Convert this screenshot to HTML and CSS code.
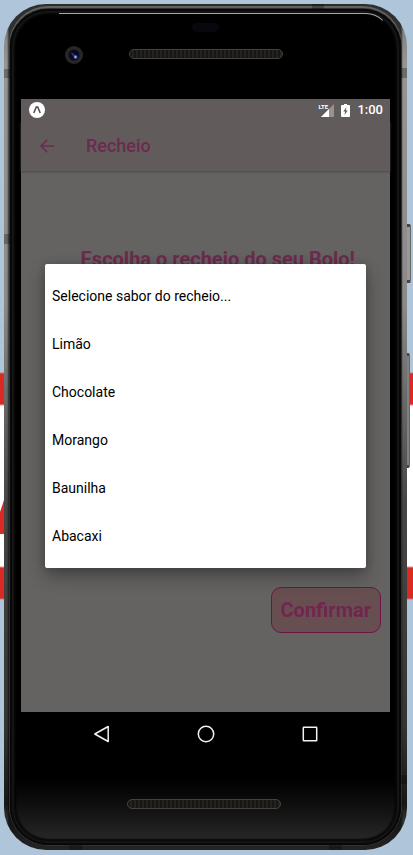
FILE: index.html
```html
<!DOCTYPE html>
<html lang="pt-BR">
<head>
<meta charset="utf-8">
<meta name="viewport" content="width=device-width, initial-scale=1">
<title>Recheio</title>
<link rel="stylesheet" href="styles.css">
</head>
<body>
<div class="stage">
  <svg class="banner-mark" viewBox="0 0 6 36" aria-hidden="true"><path d="M0 12L4 0H6V34H0Z" fill="#d92a23"/></svg>
  <span class="side-key side-key-power"></span>
  <span class="side-key side-key-volume"></span>
  <div class="phone">
    <span class="seam seam-left-top"></span>
    <span class="seam seam-left-middle"></span>
    <span class="seam seam-right-top"></span>
    <span class="seam seam-right-bottom"></span>
    <span class="seam seam-top"></span>
    <span class="seam seam-bottom-left"></span>
    <span class="seam seam-bottom-right"></span>
    <div class="glass">
      <div class="bezel-top">
        <span class="glint"></span>
        <span class="sensor"></span>
        <svg class="camera" viewBox="0 0 18 18" aria-hidden="true">
          <circle cx="9" cy="9" r="9" fill="#292725"/>
          <circle cx="9" cy="9" r="5.5" fill="#080b1d"/>
          <path d="M6 6l3 2 2 4-4-3z" fill="#25367c"/>
          <circle cx="10.5" cy="11" r="2" fill="#4258b8"/>
          <circle cx="10.5" cy="11" r="1" fill="#a8baff"/>
        </svg>
        <span class="speaker"></span>
      </div>

      <div class="screen">
        <div class="status-bar">
          <svg class="app-badge" viewBox="0 0 16 16" aria-hidden="true">
            <circle cx="8" cy="8" r="8" fill="#fff"/>
            <path d="M4.8 11L7.3 5h1.4l2.5 6" fill="none" stroke="#514b4b" stroke-width="1.5"/>
          </svg>
          <div class="status-icons">
            <div class="signal">
              <span class="network">LTE</span>
              <svg class="signal-bars" viewBox="0 0 13 13" aria-hidden="true">
                <path d="M13 0V13H0z" fill="#979292"/>
                <path d="M8 5V13H0z" fill="#fff"/>
              </svg>
            </div>
            <svg class="battery" viewBox="0 0 9 13" aria-hidden="true">
              <path d="M3 0h3v1H8q1 0 1 1v10q0 1-1 1H1q-1 0-1-1V2q0-1 1-1h2z" fill="#fff"/>
              <path d="M5.500 3L2.300 7.500h1.800L3.500 11 6.700 6.500H4.800z" fill="#625b5b"/>
            </svg>
            <span class="clock">1:00</span>
          </div>
        </div>
        <header class="app-bar">
          <button class="back" type="button" aria-label="Voltar">
            <svg viewBox="0 0 14 14" aria-hidden="true"><path d="M14 7H1M7.300.7L1 7l6.300 6.300" fill="none" stroke="#6b2b4e" stroke-width="1.500"/></svg>
          </button>
          <h1 class="title">Recheio</h1>
        </header>
        <main class="content">
          <h2 class="prompt">Escolha o recheio do seu Bolo!</h2>
          <button class="confirm" type="button">Confirmar</button>
        </main>
        <div class="overlay">
          <div class="dialog" role="dialog" aria-label="Sabor do recheio">
            <button class="option" type="button">Selecione sabor do recheio...</button>
            <button class="option" type="button">Limão</button>
            <button class="option" type="button">Chocolate</button>
            <button class="option" type="button">Morango</button>
            <button class="option" type="button">Baunilha</button>
            <button class="option" type="button">Abacaxi</button>
          </div>
        </div>
      </div>

      <div class="bezel-bottom">
        <nav class="nav-bar">
          <button class="nav-key" type="button" aria-label="Anterior"><svg viewBox="0 0 24 24" aria-hidden="true"><path d="M18.200 4.500v15L4.800 12z" stroke-linejoin="round"/></svg></button>
          <button class="nav-key" type="button" aria-label="Início"><svg viewBox="0 0 24 24" aria-hidden="true"><circle cx="12" cy="12" r="7.700"/></svg></button>
          <button class="nav-key" type="button" aria-label="Recentes"><svg viewBox="0 0 24 24" aria-hidden="true"><rect x="5.300" y="5.300" width="13.400" height="13.400" rx=".5"/></svg></button>
        </nav>
        <span class="speaker speaker-bottom"></span>
      </div>
    </div>
  </div>
</div>
</body>
</html>
```
FILE: styles.css
```css
* {
  box-sizing: border-box;
}

body {
  margin: 0;
  font-family: Roboto, "Liberation Sans", sans-serif;
}

button {
  margin: 0;
  padding: 0;
  border: 0;
  background: none;
  font: inherit;
  cursor: pointer;
}

svg {
  display: block;
}

.stage {
  position: relative;
  display: flex;
  min-height: 100vh;
  padding: 4px 6px 5px 4px;
  overflow: hidden;
  background: linear-gradient(#afc5da 372px, #d92a23 374px 404px, #fff 406px 566px, #d92a23 568px 598px, #afc5da 600px);
}

.banner-mark {
  position: absolute;
  left: 0;
  top: 500px;
  width: 6px;
  height: 36px;
}

.side-key {
  position: absolute;
  width: 5px;
  border: 1px solid #666;
  border-top: 3px solid #444;
  border-bottom: 3px solid #444;
  border-radius: 0 2px 2px 0;
  background: #999;
}

.side-key-power {
  top: 224px;
  right: 2px;
  height: 59px;
}

.side-key-volume {
  top: 353px;
  right: 3px;
  height: 115px;
  background: #808080;
}

.phone {
  position: relative;
  display: flex;
  flex: 1;
  padding: 5px 6px;
  border-radius: 42px;
  background:
    linear-gradient(90deg, #0000 3px, #000000a0 5px, #000000a0 calc(100% - 6px), #0000 calc(100% - 4px)),
    linear-gradient(#777 0, #969494 60px, #8b8989 300px, #464646 500px, #353535 720px, #171717 800px, #656364 100%);
}

.glass {
  display: flex;
  flex: 1;
  flex-direction: column;
  padding: 0 11px;
  border-radius: 38px;
  background: linear-gradient(#000 0, #000 calc(100% - 65px), #121212 calc(100% - 35px), #292929 calc(100% - 3px), #000 100%);
  box-shadow: inset 0 0 0 2px #080808, inset 0 0 2px 4px #181818, inset 0 0 2px 6px #050505, 0 0 0 1px #303030, 0 -2px 0 1px #606060;
}

.seam {
  position: absolute;
  background: #00000045;
}

.seam-left-top {
  top: 65px;
  left: 0;
  width: 6px;
  height: 9px;
}

.seam-left-middle {
  top: 230px;
  left: 0;
  width: 6px;
  height: 10px;
}

.seam-right-top {
  top: 64px;
  right: 0;
  width: 6px;
  height: 10px;
}

.seam-right-bottom {
  right: 0;
  bottom: 66px;
  width: 6px;
  height: 9px;
}

.seam-top {
  top: 0;
  right: 83px;
  width: 12px;
  height: 5px;
}

.seam-bottom-left {
  bottom: 0;
  left: 65px;
  width: 13px;
  height: 5px;
}

.seam-bottom-right {
  right: 65px;
  bottom: 0;
  width: 13px;
  height: 5px;
}

.bezel-top {
  position: relative;
  display: flex;
  justify-content: center;
  height: 90px;
  padding-top: 40px;
}

.glint {
  position: absolute;
  top: 4px;
  right: 0;
  left: 38px;
  height: 24px;
  border-top: 1px solid #a1a8a6;
  border-right: 1px solid transparent;
  border-radius: 0 28px 0 0;
}

.sensor {
  position: absolute;
  top: 14px;
  left: calc(50% - 14px);
  width: 27px;
  height: 9px;
  border-radius: 5px;
  background: #07080d;
}

.camera {
  position: absolute;
  top: 37px;
  left: 44px;
  width: 18px;
  height: 18px;
}

.speaker {
  width: 154px;
  height: 10px;
  border: 1px solid #45433f;
  border-radius: 5px;
  background: repeating-linear-gradient(90deg, #171614 0 2px, #25231f 2px 4px);
}

.screen {
  position: relative;
  display: flex;
  flex: 1;
  flex-direction: column;
  background: #656361;
}

.status-bar {
  display: flex;
  align-items: center;
  justify-content: space-between;
  height: 22px;
  padding: 0 7px 0 8px;
  background: #625b5b;
}

.app-badge {
  width: 16px;
  height: 16px;
}

.status-icons {
  display: flex;
  align-items: center;
  gap: 7px;
  color: #fff;
}

.signal {
  position: relative;
  padding-left: 3px;
}

.network {
  position: absolute;
  top: 0;
  left: 0;
  font-family: "Liberation Sans Narrow", Roboto, sans-serif;
  font-size: 6px;
  font-weight: 700;
  line-height: 6px;
}

.signal-bars {
  width: 13px;
  height: 13px;
}

.battery {
  width: 9px;
  height: 13px;
}

.clock {
  font-size: 13px;
  font-weight: 500;
  line-height: 22px;
}

.app-bar {
  display: flex;
  align-items: center;
  gap: 30px;
  height: 50px;
  padding: 0 17px;
  background: #625b5b;
  box-shadow: 0 1px 2px #4b4848;
}

.back {
  width: 18px;
  height: 18px;
  padding: 2px;
}

.title {
  margin: 0;
  color: #6b2b4e;
  font-size: 18px;
  font-weight: 500;
  line-height: 24px;
}

.content {
  display: flex;
  flex: 1;
  flex-direction: column;
  align-items: flex-end;
  justify-content: space-between;
  padding: 76px 9px 79px;
}

.prompt {
  margin: 0 26px 0 0;
  color: #6b2b4e;
  font-size: 20px;
  font-weight: 700;
  line-height: 24px;
}

.confirm {
  height: 46px;
  padding: 0 9px;
  border: 1px solid #701347;
  border-radius: 10px;
  background: #674f51;
  color: #70264e;
  font-size: 20px;
  font-weight: 700;
}

.overlay {
  position: absolute;
  inset: 20px 0 0;
  display: flex;
  align-items: center;
  padding: 0 24px;
}

.dialog {
  display: flex;
  flex: 1;
  flex-direction: column;
  padding: 8px 0;
  border-radius: 2px;
  background: #fff;
  box-shadow: 0 8px 18px #00000055, 0 0 8px #00000022;
}

.option {
  height: 48px;
  padding: 0 7px;
  color: #000;
  font-size: 14px;
  text-align: left;
}

.bezel-bottom {
  display: flex;
  flex-direction: column;
  align-items: center;
  height: 133px;
}

.nav-bar {
  display: flex;
  align-items: center;
  gap: 80px;
  height: 43px;
}

.nav-key {
  width: 24px;
  height: 24px;
}

.nav-key svg {
  fill: none;
  stroke: #f3f3f3;
  stroke-width: 1.5;
}

.speaker-bottom {
  margin: 44px 4px 0 0;
}
```
